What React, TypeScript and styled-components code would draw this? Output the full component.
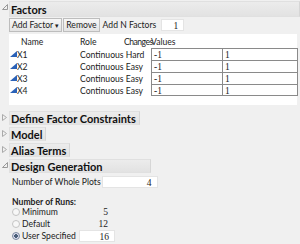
import React from 'react';
import styled, { createGlobalStyle } from 'styled-components';

const GlobalStyle = createGlobalStyle`
  html, body {
    margin: 0;
    padding: 0;
    background: #f0f0f0;
  }
  body {
    font-family: Lato, "Open Sans", sans-serif;
    font-size: 8.6px;
    color: #222;
  }
`;

const factors = [
  { name: 'X1', role: 'Continuous Hard' },
  { name: 'X2', role: 'Continuous Easy' },
  { name: 'X3', role: 'Continuous Easy' },
  { name: 'X4', role: 'Continuous Easy' },
];

const Disclosure = ({ open }: { open: boolean }) => (
  <Twisty>
    {open ? (
      <svg width="6" height="6" viewBox="0 0 6 6">
        <path d="M5.5 0.5 L5.5 5.5 L0.5 5.5 Z" fill="none" stroke="#999" strokeWidth="1" />
      </svg>
    ) : (
      <svg width="5" height="7" viewBox="0 0 5 7">
        <path d="M0.5 0.5 L4.5 3.5 L0.5 6.5 Z" fill="none" stroke="#aaa" strokeWidth="1" />
      </svg>
    )}
  </Twisty>
);

const FactorIcon = () => (
  <svg width="7" height="6" viewBox="0 0 7 6">
    <path d="M7 0 L7 6 L0 6 Z" fill="#2b62b8" />
  </svg>
);

const App = () => {
  return (
    <>
      <GlobalStyle />
      <Page>
        <Section>
          <Disclosure open />
          <Header $wide>Factors</Header>
          <Body>
            <Toolbar>
              <Button>
                Add Factor <Caret>▾</Caret>
              </Button>
              <Button>Remove</Button>
              <Label>Add N Factors</Label>
              <NumberBox $width={23}>1</NumberBox>
            </Toolbar>
            <Panel>
              <FactorTable>
                <HeadCell />
                <HeadCell $pad={4}>Name</HeadCell>
                <HeadCell>Role</HeadCell>
                <HeadCell $tight>Changes</HeadCell>
                <HeadCell $span>Values</HeadCell>
                {factors.map((f) => (
                  <React.Fragment key={f.name}>
                    <IconCell>
                      <FactorIcon />
                    </IconCell>
                    <Cell>{f.name}</Cell>
                    <Cell $span>{f.role}</Cell>
                    <ValueCell>-1</ValueCell>
                    <ValueCell $last>1</ValueCell>
                  </React.Fragment>
                ))}
              </FactorTable>
            </Panel>
          </Body>
        </Section>

        <Section>
          <Disclosure open={false} />
          <Header>Define Factor Constraints</Header>
        </Section>
        <Section>
          <Disclosure open={false} />
          <Header>Model</Header>
        </Section>
        <Section>
          <Disclosure open={false} />
          <Header>Alias Terms</Header>
        </Section>

        <Section>
          <Disclosure open />
          <Header $minWidth={142}>Design Generation</Header>
          <Body>
            <FieldRow>
              <FieldLabel>Number of Whole Plots</FieldLabel>
              <NumberBox $width={56} $gap={1}>4</NumberBox>
            </FieldRow>
            <RunsTitle>Number of Runs:</RunsTitle>
            <RadioRow>
              <Radio />
              <RadioLabel>Minimum</RadioLabel>
              <RadioValue>5</RadioValue>
            </RadioRow>
            <RadioRow>
              <Radio />
              <RadioLabel>Default</RadioLabel>
              <RadioValue>12</RadioValue>
            </RadioRow>
            <RadioRow>
              <Radio $checked />
              <RadioLabel>User Specified</RadioLabel>
              <NumberBox $width={36} $gap={3}>16</NumberBox>
            </RadioRow>
          </Body>
        </Section>
      </Page>
    </>
  );
};

const Page = styled.div`
  width: 300px;
  height: 244px;
  overflow: hidden;
  padding-top: 1px;
  box-sizing: border-box;
  display: flex;
  flex-direction: column;
  gap: 2px;
`;

const Section = styled.div`
  display: grid;
  grid-template-columns: 9px 1fr;
  align-items: start;
`;

const Twisty = styled.div`
  display: flex;
  justify-content: center;
  padding-top: 3px;
`;

const Header = styled.div<{ $wide?: boolean; $minWidth?: number }>`
  justify-self: ${({ $wide }) => ($wide ? 'stretch' : 'start')};
  min-width: ${({ $minWidth }) => ($minWidth ? `${$minWidth}px` : 'auto')};
  box-sizing: border-box;
  height: ${({ $wide }) => ($wide ? '16px' : '14px')};
  line-height: ${({ $wide }) => ($wide ? '15px' : '13px')};
  padding: 0 3px 0 1px;
  font-weight: 700;
  font-size: 11px;
  color: #111;
  background: linear-gradient(#ececec, #e2e2e2);
  border: 1px solid #e0e0e0;
  border-right-color: #d6d6d6;
`;

const Body = styled.div`
  grid-column: 2;
  display: flex;
  flex-direction: column;
`;

const Toolbar = styled.div`
  display: flex;
  align-items: center;
  gap: 1px;
  padding: 1px 0 2px;
`;

const Button = styled.div`
  height: 14px;
  line-height: 12px;
  box-sizing: border-box;
  padding: 0 2px 0 2px;
  border: 1px solid #bdbdbd;
  background: linear-gradient(#f7f7f7, #e4e4e4);
  color: #222;
  white-space: nowrap;
`;

const Caret = styled.span`
  font-size: 7px;
`;

const Label = styled.span`
  margin-left: 2px;
  white-space: nowrap;
`;

const NumberBox = styled.div<{ $width: number; $gap?: number }>`
  width: ${({ $width }) => $width}px;
  height: 12px;
  line-height: 12px;
  box-sizing: border-box;
  margin-left: ${({ $gap }) => ($gap ?? 4)}px;
  padding-right: 5px;
  text-align: right;
  background: #fff;
  border: 1px solid #e4e4e4;
  font-family: "Liberation Serif", serif;
  font-size: 9.5px;
`;

const Panel = styled.div`
  width: 288px;
  height: 71px;
  margin-bottom: 4px;
  background: #fff;
  box-sizing: border-box;
  padding-top: 2px;
`;

const FactorTable = styled.div`
  display: grid;
  grid-template-columns: 7px 63px 44px 27px 71px 76px;
  grid-auto-rows: 12px;
  padding-left: 1px;
`;

const HeadCell = styled.div<{ $span?: boolean; $pad?: number; $tight?: boolean }>`
  line-height: 12px;
  white-space: nowrap;
  padding-left: ${({ $pad }) => ($pad ? `${$pad}px` : '0')};
  grid-column: ${({ $span }) => ($span ? 'span 2' : 'auto')};
  letter-spacing: ${({ $tight }) => ($tight ? '-0.5px' : 'normal')};
`;

const IconCell = styled.div`
  display: flex;
  align-items: flex-start;
  padding-top: 3px;
`;

const Cell = styled.div<{ $span?: boolean }>`
  line-height: 14px;
  white-space: nowrap;
  grid-column: ${({ $span }) => ($span ? 'span 2' : 'auto')};
`;

const ValueCell = styled.div<{ $last?: boolean }>`
  line-height: 12px;
  box-sizing: border-box;
  padding-left: 2px;
  font-family: "Liberation Serif", serif;
  font-size: 9.5px;
  border-top: 1px solid #8a8a8a;
  border-left: 1px solid #8a8a8a;
  border-right: ${({ $last }) => ($last ? '1px solid #8a8a8a' : 'none')};
  &:nth-last-child(-n + 2) {
    border-bottom: 1px solid #8a8a8a;
  }
`;

const FieldRow = styled.div`
  display: flex;
  align-items: center;
  height: 12px;
  padding: 3px 0 0 3px;
`;

const FieldLabel = styled.span`
  flex: none;
  white-space: nowrap;
`;

const RunsTitle = styled.div`
  font-weight: 700;
  line-height: 8px;
  padding: 10px 0 0 3px;
`;

const RadioRow = styled.div`
  display: flex;
  align-items: center;
  height: 12px;
  padding-left: 3px;
`;

const Radio = styled.span<{ $checked?: boolean }>`
  width: 6px;
  height: 6px;
  border-radius: 50%;
  border: 1px solid ${({ $checked }) => ($checked ? '#7a8aa0' : '#c4c4c4')};
  background: ${({ $checked }) => ($checked ? 'radial-gradient(#4a5f7a 40%, #dde 45%)' : '#f7f7f7')};
  margin-right: 2px;
`;

const RadioLabel = styled.span`
  flex: none;
  min-width: 52px;
  white-space: nowrap;
`;

const RadioValue = styled.span`
  width: 36px;
  margin-left: 3px;
  text-align: right;
  padding-right: 5px;
  box-sizing: border-box;
  font-family: "Liberation Serif", serif;
  font-size: 9.5px;
`;

export default App;
